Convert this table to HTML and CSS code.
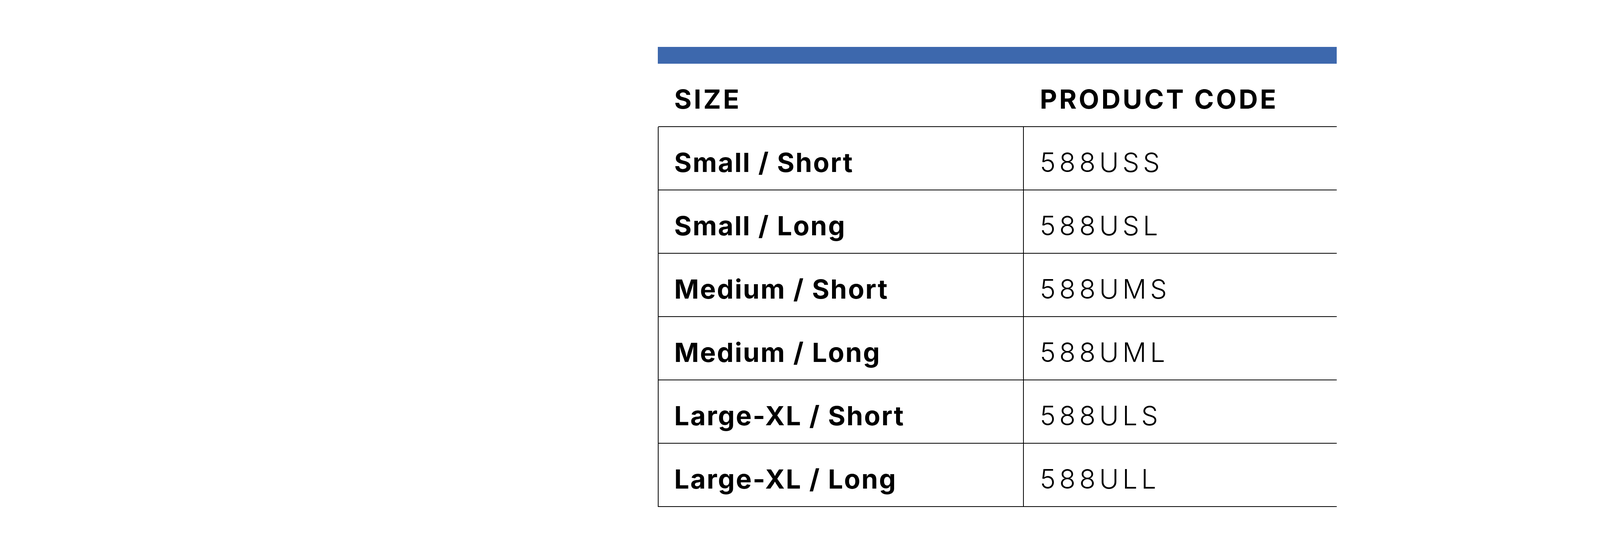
FILE: index.html
```html
<!DOCTYPE html>
<html lang="en">
<head>
<meta charset="utf-8">
<title>Size chart</title>
<link rel="stylesheet" href="styles.css">
</head>
<body>
<div class="sheet">
  <div class="bar"></div>
  <div class="table">
    <div class="row head">
      <div class="cell size">SIZE</div>
      <div class="cell code">PRODUCT CODE</div>
    </div>
    <div class="row">
      <div class="cell size">Small / Short</div>
      <div class="cell code">588USS</div>
    </div>
    <div class="row">
      <div class="cell size">Small / Long</div>
      <div class="cell code">588USL</div>
    </div>
    <div class="row">
      <div class="cell size">Medium / Short</div>
      <div class="cell code">588UMS</div>
    </div>
    <div class="row">
      <div class="cell size">Medium / Long</div>
      <div class="cell code">588UML</div>
    </div>
    <div class="row">
      <div class="cell size">Large-XL / Short</div>
      <div class="cell code">588ULS</div>
    </div>
    <div class="row">
      <div class="cell size">Large-XL / Long</div>
      <div class="cell code">588ULL</div>
    </div>
  </div>
</div>
</body>
</html>
```

FILE: styles.css
```css
html, body {
  margin: 0;
  background: #ffffff;
}

body {
  font-family: "Inter", "Liberation Sans", sans-serif;
  color: #000000;
}

.sheet {
  margin-left: 1684px;
  padding-top: 120px;
  width: 1738px;
}

.bar {
  height: 43px;
  background: #3d68ad;
}

.row {
  display: grid;
  grid-template-columns: 935px 1fr;
  height: 162px;
  box-sizing: border-box;
  border-bottom: 2px solid #000000;
  border-left: 2px solid #000000;
}

.row.head {
  border-left-color: transparent;
}

.cell {
  box-sizing: border-box;
  padding-top: 55px;
  font-size: 68px;
  line-height: 70px;
  white-space: nowrap;
}

.cell.size {
  padding-left: 40px;
  font-weight: 700;
  letter-spacing: 0.04em;
  border-right: 2px solid #000000;
}

.head .cell {
  letter-spacing: 0.08em;
}

.head .cell.size {
  border-right-color: transparent;
}

.cell.code {
  padding-left: 41px;
  font-weight: 300;
  letter-spacing: 0.14em;
}

.head .cell.code {
  font-weight: 700;
  letter-spacing: 0.08em;
}
```
